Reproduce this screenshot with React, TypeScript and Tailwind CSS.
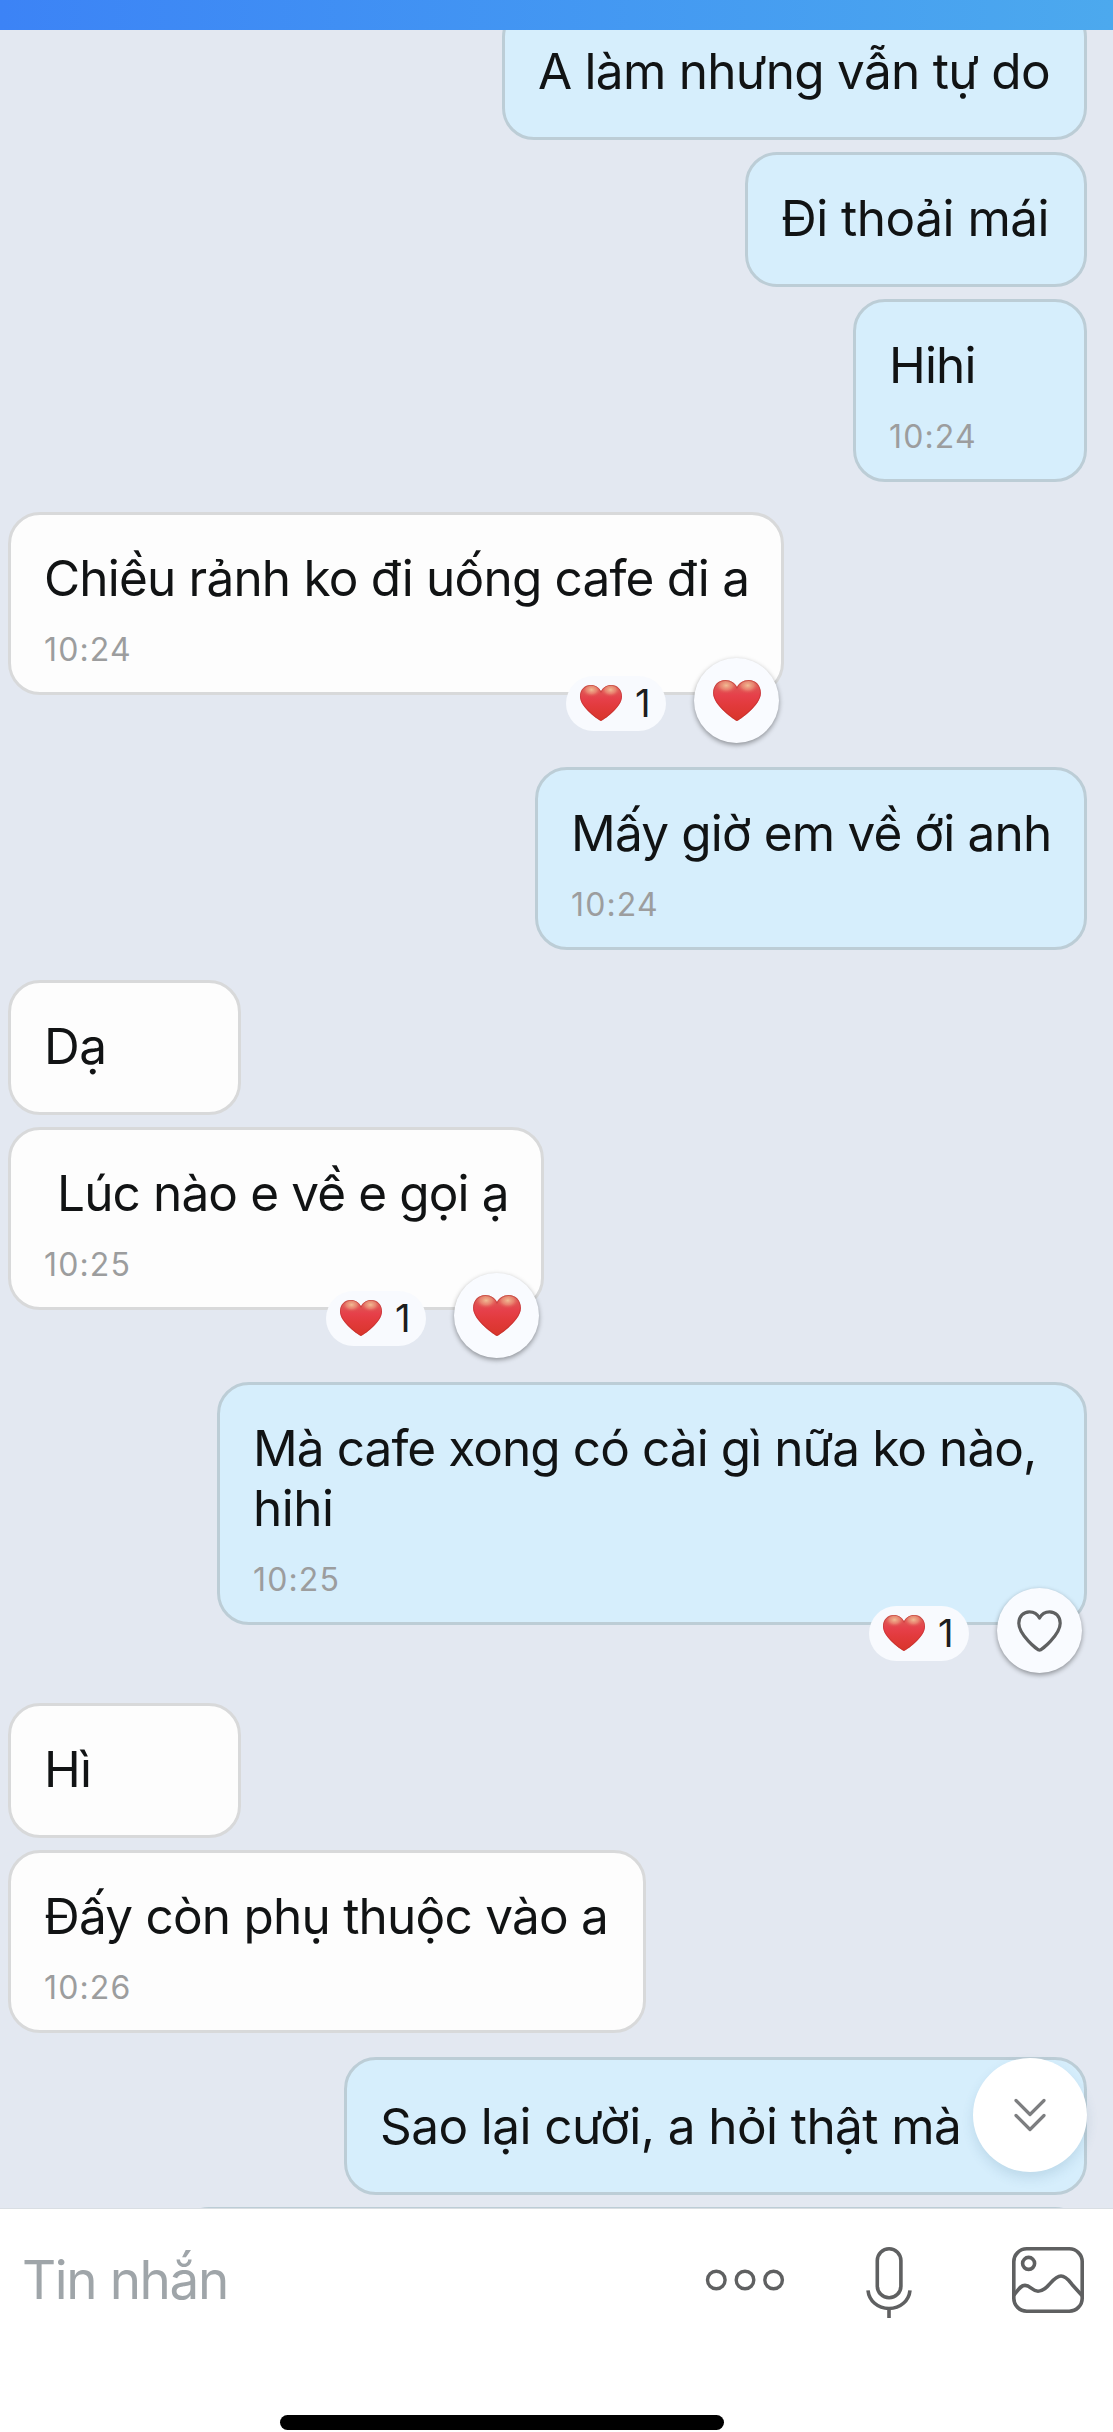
type Line = { text: string; tracking: string };

type Message = {
  mine?: boolean;
  box: string;
  lines: Line[];
  time?: string;
  liked?: "mine" | "other";
};

const messages: Message[] = [
  { mine: true, box: "-mt-[25px] h-[135px] w-[585px]", lines: [{ text: "A làm nhưng vẫn tự do", tracking: "tracking-[-0.73px]" }] },
  { mine: true, box: "mt-3 h-[135px] w-[342px]", lines: [{ text: "Đi thoải mái", tracking: "tracking-[-0.51px]" }] },
  { mine: true, box: "mt-3 h-[183px] w-[234px]", lines: [{ text: "Hihi", tracking: "tracking-[-0.85px]" }], time: "10:24" },
  {
    box: "mt-[30px] h-[183px] w-[776px]",
    lines: [{ text: "Chiều rảnh ko đi uống cafe đi a", tracking: "tracking-[-0.81px]" }],
    time: "10:24",
    liked: "mine",
  },
  { mine: true, box: "mt-[72px] h-[183px] w-[552px]", lines: [{ text: "Mấy giờ em về ới anh", tracking: "tracking-[-0.82px]" }], time: "10:24" },
  { box: "mt-[30px] h-[135px] w-[233px]", lines: [{ text: "Dạ", tracking: "tracking-[-0.5px]" }] },
  {
    box: "mt-3 h-[183px] w-[536px]",
    lines: [{ text: " Lúc nào e về e gọi ạ", tracking: "tracking-[-0.87px]" }],
    time: "10:25",
    liked: "mine",
  },
  {
    mine: true,
    box: "mt-[72px] h-[243px] w-[870px]",
    lines: [
      { text: "Mà cafe xong có cài gì nữa ko nào,", tracking: "tracking-[-0.92px]" },
      { text: "hihi", tracking: "tracking-[-0.5px]" },
    ],
    time: "10:25",
    liked: "other",
  },
  { box: "mt-[78px] h-[135px] w-[233px]", lines: [{ text: "Hì", tracking: "tracking-[-0.8px]" }] },
  { box: "mt-3 h-[183px] w-[638px]", lines: [{ text: "Đấy còn phụ thuộc vào a", tracking: "tracking-[-0.77px]" }], time: "10:26" },
  { mine: true, box: "mt-6 h-[138px] w-[743px] pt-[3px]", lines: [{ text: "Sao lại cười, a hỏi thật mà", tracking: "tracking-[-0.58px]" }] },
  { mine: true, box: "mt-3 h-[135px] w-[910px]", lines: [] },
];

const HEART =
  "M21 36C19.4 35.4 0 22.6 0 11.4C0 4.6 4.8 0 10.8 0C15.4 0 19.2 2.6 21 6.2C22.8 2.6 26.6 0 31.2 0C37.2 0 42 4.6 42 11.4C42 22.6 22.6 35.4 21 36Z";

function RedHeart({ className }: { className: string }) {
  return (
    <svg viewBox="0 0 42 36" className={className} aria-hidden="true">
      <defs>
        <linearGradient id="heart-fill" x1="0" y1="0" x2="0" y2="1">
          <stop offset="0" stopColor="#d9655a" />
          <stop offset="0.38" stopColor="#e6404a" />
          <stop offset="0.6" stopColor="#e23a3c" />
          <stop offset="1" stopColor="#d8352a" />
        </linearGradient>
        <radialGradient id="heart-gloss">
          <stop offset="0" stopColor="#f5cfa0" stopOpacity="0.85" />
          <stop offset="0.5" stopColor="#f0a585" stopOpacity="0.55" />
          <stop offset="1" stopColor="#e6404a" stopOpacity="0" />
        </radialGradient>
        <clipPath id="heart-clip">
          <path d={HEART} />
        </clipPath>
      </defs>
      <path d={HEART} fill="url(#heart-fill)" />
      <g clipPath="url(#heart-clip)">
        <ellipse cx="11.5" cy="4.8" rx="10.5" ry="7.6" fill="url(#heart-gloss)" />
        <ellipse cx="30.5" cy="4.8" rx="10.5" ry="7.6" fill="url(#heart-gloss)" />
        <path d={HEART} fill="none" stroke="#b32d2c" strokeOpacity="0.5" strokeWidth="1.6" />
      </g>
    </svg>
  );
}

function OutlineHeart() {
  return (
    <svg viewBox="0 0 45 42" className="h-[42px] w-[45px]" fill="none" stroke="#5f6061" strokeWidth="3.2" strokeLinejoin="round" aria-hidden="true">
      <path d="M22.5 40.2C20.6 40.2 1.8 24.8 1.8 13.2C1.8 6.2 6.6 1.8 12.4 1.8C17 1.8 20.6 4.4 22.5 8C24.4 4.4 28 1.8 32.6 1.8C38.4 1.8 43.2 6.2 43.2 13.2C43.2 24.8 24.4 40.2 22.5 40.2Z" />
    </svg>
  );
}

function Reactions({ liked }: { liked: "mine" | "other" }) {
  return (
    <div className="absolute right-[2px] bottom-[-51px] flex items-center gap-[28px]">
      <div className="mt-[5px] flex h-[55px] w-[100px] items-center rounded-full bg-[#f8fafe] pl-[14px]">
        <RedHeart className="h-[36px] w-[42px]" />
        <span className="ml-[13px] text-[38.5px] leading-none text-[#1c1d1e]">1</span>
      </div>
      <div className="flex h-[85px] w-[85px] items-center justify-center rounded-full bg-[#f9fbff] shadow-[0_2px_5px_rgba(0,0,0,0.38)]">
        {liked === "mine" ? <RedHeart className="h-[41px] w-[48px]" /> : <OutlineHeart />}
      </div>
    </div>
  );
}

function Bubble({ message }: { message: Message }) {
  const { mine, box, lines, time, liked } = message;
  const tone = mine ? "self-end border-[#bccdd6] bg-[#d6eefc]" : "self-start border-[#d8d9da] bg-[#fdfdfd]";
  return (
    <div className={`relative shrink-0 rounded-[32px] border-[3px] ${tone} ${box}`}>
      <div className="pt-[33px] pl-[33px]">
        {lines.map((line) => (
          <p key={line.text} className={`whitespace-pre text-[49.5px] leading-[60px] text-[#111314] ${line.tracking}`}>
            {line.text}
          </p>
        ))}
        {time && <p className="mt-[22px] text-[32px] leading-[40px] tracking-[1.15px] text-[#9c9d9e]">{time}</p>}
      </div>
      {liked && <Reactions liked={liked} />}
    </div>
  );
}

function MoreIcon() {
  return (
    <svg viewBox="0 0 80 22" className="h-[22px] w-[80px]" fill="none" stroke="#5f6061" strokeWidth="3.4" aria-hidden="true">
      <circle cx="11.3" cy="11" r="8.8" />
      <circle cx="40" cy="11" r="8.8" />
      <circle cx="68.6" cy="11" r="8.8" />
    </svg>
  );
}

function MicIcon() {
  return (
    <svg viewBox="0 0 46 71" className="h-[71px] w-[46px]" fill="none" stroke="#5f6061" strokeWidth="3.6" aria-hidden="true">
      <rect x="11.3" y="1.8" width="23.6" height="49" rx="11.8" />
      <path d="M2 43.3C3 53.6 11.6 61.5 23 61.5C34.4 61.5 43 53.6 44 43.3" />
      <path d="M23 61.5V71" />
    </svg>
  );
}

function PictureIcon() {
  return (
    <svg viewBox="0 0 72 66" className="h-[66px] w-[72px]" fill="none" stroke="#5f6061" strokeWidth="3.6" aria-hidden="true">
      <rect x="1.8" y="1.8" width="68.4" height="62.4" rx="13" />
      <circle cx="16.6" cy="16.4" r="6" />
      <path d="M2 48C6.5 42.5 8.5 38.4 13 38.4C18.5 38.4 20 44.2 26 44.2C36.5 44.2 40 29 49 29C54.5 29 57.5 34.5 60.5 38L70 48.5" />
    </svg>
  );
}

function JumpToLatest() {
  return (
    <div className="absolute right-[26px] bottom-[36px] flex h-[114px] w-[114px] items-center justify-center rounded-full bg-white shadow-[0_6px_12px_rgba(60,110,140,0.16)]">
      <svg viewBox="0 0 34 34" className="h-[34px] w-[34px]" fill="none" stroke="#7d7e80" strokeWidth="3.2" strokeLinecap="round" strokeLinejoin="round" aria-hidden="true">
        <path d="M3 2.5L17 16.5L31 2.5" />
        <path d="M3 17.5L17 31.5L31 17.5" />
      </svg>
    </div>
  );
}

export default function App() {
  return (
    <div className="flex h-[2432px] w-[1113px] flex-col overflow-hidden bg-white font-['Inter','Liberation_Sans',sans-serif]">
      <header className="h-[30px] shrink-0 bg-linear-to-r from-[#3c83f6] to-[#4ca9ee]" />
      <div className="relative h-[2178px] shrink-0">
        <main className="flex h-full flex-col overflow-hidden bg-[#e3e8f1] pr-[26px] pl-2">
          {messages.map((message, index) => (
            <Bubble key={index} message={message} />
          ))}
        </main>
        <JumpToLatest />
      </div>
      <footer className="flex flex-1 flex-col border-t border-[#d9dee3] bg-white">
        <div className="flex h-[142px] items-center pr-[29px] pl-[22px]">
          <span className="flex-1 text-[53px] leading-[64px] tracking-[-1.4px] text-[#9fa5a9]">Tin nhắn</span>
          <MoreIcon />
          <div className="mt-[4px] mr-[100px] ml-[81px]">
            <MicIcon />
          </div>
          <PictureIcon />
        </div>
        <div className="mt-auto mb-[2px] ml-[280px] h-[15px] w-[444px] rounded-full bg-black" />
      </footer>
    </div>
  );
}
